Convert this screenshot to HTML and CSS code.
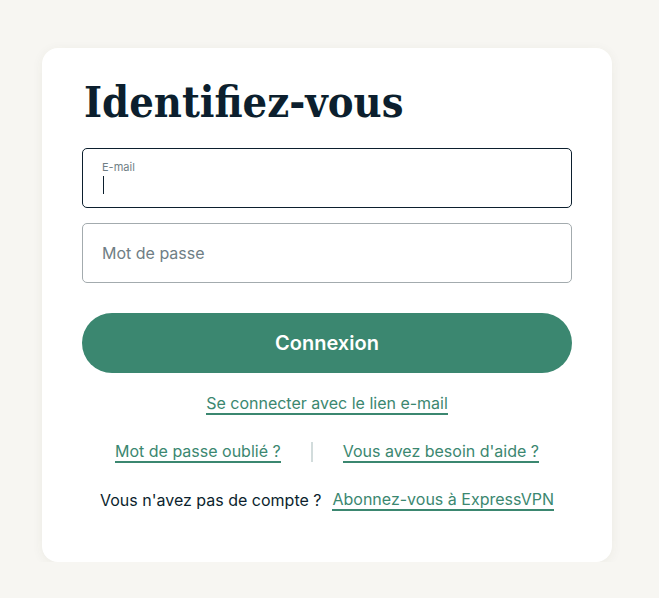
FILE: index.html
```html
<!DOCTYPE html>
<html lang="fr">
<head>
    <meta charset="UTF-8">
    <meta name="viewport" content="width=device-width, initial-scale=1.0">
    <title>Identifiez-vous</title>
    <link rel="stylesheet" href="styles.css">
</head>
<body>
    <div class="card">
        <h1>Identifiez-vous</h1>

        <div class="field field-active">
            <span class="field-label">E-mail</span>
            <span class="caret"></span>
        </div>
        <div class="field">
            <span class="field-placeholder">Mot de passe</span>
        </div>

        <button class="btn-login">Connexion</button>

        <div class="links">
            <div class="row">
                <a href="#" class="link">Se connecter avec le lien e-mail</a>
            </div>
            <div class="row row-help">
                <a href="#" class="link">Mot de passe oublié ?</a>
                <span class="sep"></span>
                <a href="#" class="link">Vous avez besoin d'aide ?</a>
            </div>
            <div class="row">
                <span class="muted">Vous n'avez pas de compte ?</span>
                <a href="#" class="link">Abonnez-vous à ExpressVPN</a>
            </div>
        </div>
    </div>
</body>
</html>
```

FILE: styles.css
```css
body {
    margin: 0;
    padding: 48px 0 0 42px;
    background-color: #f7f6f2;
    font-family: 'Inter', 'Noto Sans', sans-serif;
    color: #0c1f2e;
}

.card {
    width: 570px;
    height: 514px;
    box-sizing: border-box;
    padding: 26px 40px 0;
    background-color: #ffffff;
    border-radius: 16px;
    box-shadow: 0 2px 12px rgba(60, 60, 40, 0.06); /* ombre légère */
}

h1 {
    margin: 0 0 18px 2px;
    font-family: 'DejaVu Serif Condensed', 'DejaVu Serif', serif;
    font-stretch: condensed;
    font-size: 43px;
    line-height: 56px;
    font-weight: bold;
    color: #0c1f2e;
}

.field {
    position: relative;
    height: 60px;
    box-sizing: border-box;
    border: 1px solid #a3abae;
    border-radius: 5px;
    padding: 0 19px;
    display: flex;
    align-items: center;
    margin-bottom: 15px;
}

.field-active {
    border-color: #0c1f2e;
}

.field-label {
    position: absolute;
    top: 11px;
    left: 19px;
    font-size: 11px;
    color: #6f7e85;
}

.caret {
    position: absolute;
    left: 20px;
    top: 27px;
    width: 1px;
    height: 18px;
    background-color: #0c1f2e;
}

.field-placeholder {
    font-size: 16px;
    color: #6f7e85;
}

.btn-login {
    display: block;
    width: 100%;
    height: 60px;
    margin-top: 30px;
    border: none;
    border-radius: 30px;
    background-color: #3b8770;
    color: #ffffff;
    font-family: 'Inter', sans-serif;
    font-size: 20px;
    font-weight: 600;
}

.links {
    margin-top: 19px;
}

.row {
    display: flex;
    justify-content: center;
    align-items: center;
    height: 24px;
    margin-bottom: 24px;
    font-size: 16px;
}

.row-help {
    gap: 30px;
}

.link {
    color: #3b8770;
    text-decoration: none;
    border-bottom: 2px solid #3b8770;
    line-height: 20px;
}

.muted {
    color: #0c1f2e;
    margin-right: 11px;
    line-height: 20px;
}

.sep {
    width: 2px;
    height: 20px;
    background-color: #d2dcdc;
}
```
